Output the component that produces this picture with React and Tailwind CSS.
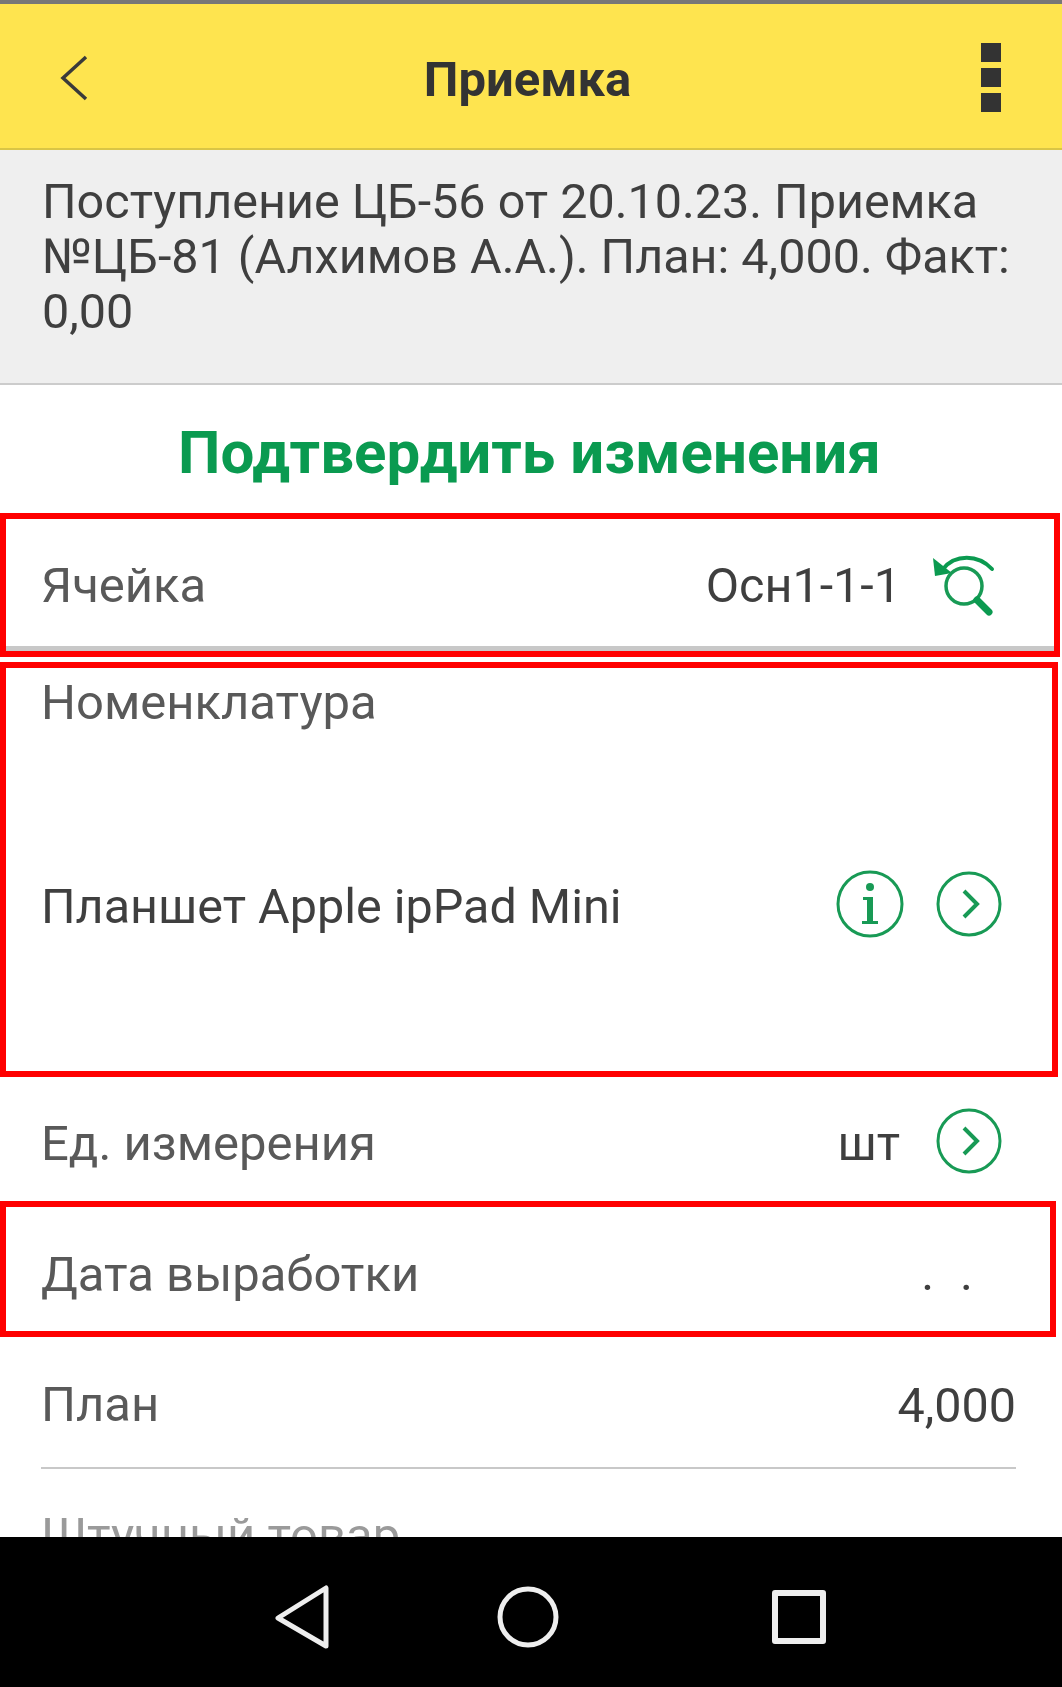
const font = { fontFamily: "Roboto, sans-serif" };

function ChevronCircle() {
  return (
    <svg width="66" height="66" viewBox="0 0 66 66" fill="none" stroke="#189a55" className="shrink-0">
      <circle cx="33" cy="33" r="31" strokeWidth="3" />
      <path d="M28 20l13 13-13 13" strokeWidth="4" />
    </svg>
  );
}

function InfoCircle() {
  return (
    <svg width="68" height="68" viewBox="0 0 68 68" fill="none" className="shrink-0">
      <circle cx="34" cy="34" r="32" stroke="#189a55" strokeWidth="3" />
      <circle cx="34" cy="17" r="4" fill="#189a55" />
      <path d="M27 27h10v24h5v3H26v-3h5V30h-4z" fill="#189a55" />
    </svg>
  );
}

function CellIcon() {
  return (
    <svg width="62" height="62" viewBox="0 0 62 62" fill="none" className="shrink-0">
      <path d="M10 15C22 0 45 0 59 15" stroke="#0b9a50" strokeWidth="4" strokeLinecap="round" />
      <path d="M0 4l2 18 17-3z" fill="#0b9a50" />
      <circle cx="31" cy="32" r="18" stroke="#189a55" strokeWidth="3.5" />
      <path d="M44 46l12 12" stroke="#0b9a50" strokeWidth="7" strokeLinecap="round" />
    </svg>
  );
}

function Row({ children, className }) {
  return <div className={"flex items-center justify-between " + className}>{children}</div>;
}

export default function App() {
  return (
    <div className="flex h-[1687px] w-[1062px] flex-col overflow-hidden bg-white" style={font}>
      <div className="h-1 shrink-0 bg-[#777777]" />

      <header className="flex h-[146px] shrink-0 items-center justify-between border-b-2 border-[#d9c545] bg-[#fee44f] pr-[61px] pl-[60px]">
        <svg width="28" height="46" viewBox="0 0 28 46" fill="none" stroke="#3a3a3a" strokeWidth="3.5" className="mt-[4px]">
          <path d="M26 2L3 23l23 21" />
        </svg>
        <h1 className="pt-[8px] pr-[14px] text-[49px] font-bold text-[#333333]">Приемка</h1>
        <div className="mt-[2px] flex flex-col gap-[6px]">
          <div className="h-[19px] w-5 bg-[#333333]" />
          <div className="h-[19px] w-5 bg-[#333333]" />
          <div className="h-[19px] w-5 bg-[#333333]" />
        </div>
      </header>

      <div className="h-[235px] shrink-0 border-b-2 border-[#cccccc] bg-[#efefef] px-[42px] pt-[24px] text-[48.5px] leading-[55px] text-[#3f3f3f]">
        Поступление ЦБ-56 от 20.10.23. Приемка №ЦБ-81 (Алхимов А.А.). План: 4,000. Факт: 0,00
      </div>

      <div className="flex h-[128px] shrink-0 items-center justify-center pt-[8px] pr-[3px] text-[60px] font-bold text-[#0a9a50]">
        Подтвердить изменения
      </div>

      <div className="min-h-0 flex-1 overflow-hidden">
        <Row className="mr-[2px] h-[144px] border-[6px] border-[#ff0000] pr-[59px] pl-[35px] text-[49px] text-[#595959] shadow-[inset_0_-5px_0_#c8c8c8]">
          <span className="pt-[1px]">Ячейка</span>
          <div className="flex items-center gap-[32px]">
            <span className="pt-[2px] text-[48.5px] text-[#3f3f3f]">Осн1-1-1</span>
            <CellIcon />
          </div>
        </Row>

        <div className="mt-[5px] mr-[4px] h-[415px] border-[6px] border-[#ff0000] pr-[50px] pl-[35px] text-[49px] text-[#595959]">
          <div className="leading-[70px]">Номенклатура</div>
          <div className="mt-[127px] flex items-center justify-between text-[48.5px] text-[#3f3f3f]">
            <span className="pt-[6px]">Планшет Apple ipPad Mini</span>
            <div className="flex items-center gap-[32px]">
              <InfoCircle />
              <ChevronCircle />
            </div>
          </div>
        </div>

        <Row className="h-[124px] pt-[4px] pr-[60px] pl-[41px] text-[49px] text-[#595959]">
          <span className="pt-[6px]">Ед. измерения</span>
          <div className="flex items-center gap-[36px]">
            <span className="pt-[6px] text-[48.5px] text-[#3f3f3f]">шт</span>
            <ChevronCircle />
          </div>
        </Row>

        <Row className="mr-[6px] h-[136px] border-[6px] border-[#ff0000] pr-[51px] pl-[35px] text-[49px] text-[#595959]">
          <span className="pt-[11px]">Дата выработки</span>
          <span className="mt-[10px] tracking-[26px] text-[#3f3f3f]">..</span>
        </Row>

        <Row className="mr-[46px] ml-[41px] h-[132px] border-b-2 border-[#c8c8c8] pt-[6px] text-[49px] text-[#595959]">
          <span>План</span>
          <span className="pt-[2px] text-[48.5px] text-[#3f3f3f]">4,000</span>
        </Row>

        <div className="pt-[30px] pl-[41px] text-[49px] text-[#9a9a9a]">Штучный товар</div>
      </div>

      <nav className="flex h-[150px] shrink-0 items-center justify-center gap-[168px] bg-black pt-[10px] pl-[38px]">
        <svg width="54" height="64" viewBox="0 0 54 64" fill="none" stroke="#eeeeee" strokeWidth="5" strokeLinejoin="round">
          <path d="M51 3v58L3 33z" />
        </svg>
        <svg width="62" height="62" viewBox="0 0 62 62" fill="none" stroke="#eeeeee" strokeWidth="5">
          <circle cx="31" cy="31" r="28" />
        </svg>
        <svg width="54" height="54" viewBox="0 0 54 54" fill="none" stroke="#eeeeee" strokeWidth="6" strokeLinejoin="round" className="ml-[45px]">
          <rect x="3" y="3" width="48" height="48" />
        </svg>
      </nav>
    </div>
  );
}
